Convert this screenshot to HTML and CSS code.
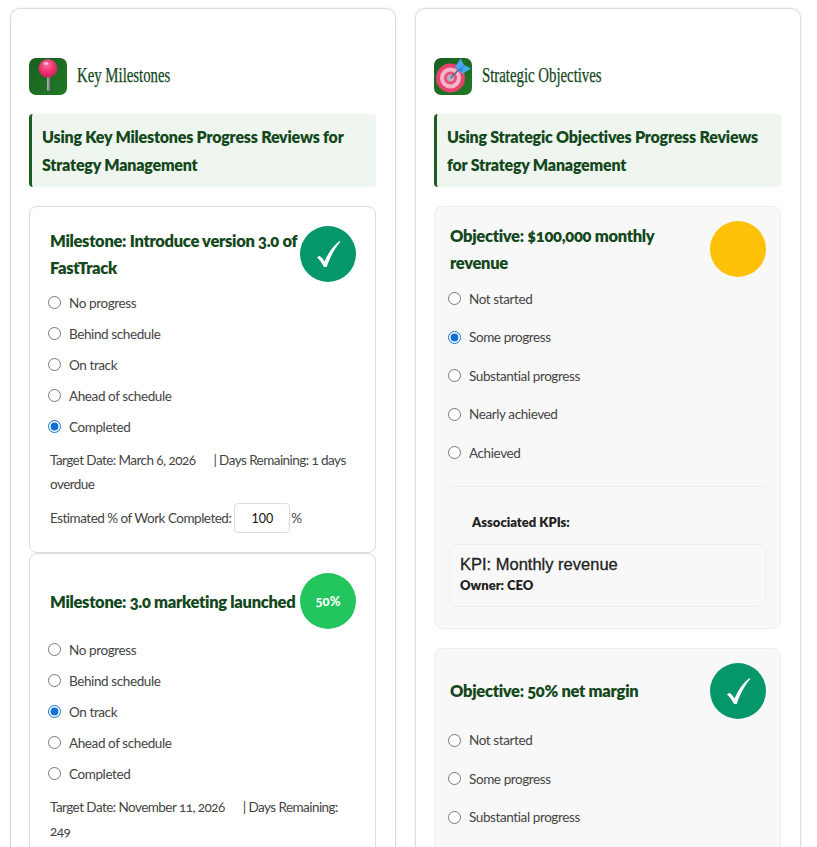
FILE: index.html
```html
<!DOCTYPE html>
<html lang="en">
<head>
    <meta charset="UTF-8">
    <meta name="viewport" content="width=device-width, initial-scale=1.0">
    <title>Strategy Progress Reviews</title>
    <link rel="stylesheet" href="styles.css">
</head>
<body>
    <div class="board">
        <!-- Milestones column -->
        <section class="panel">
            <div class="panel-head">
                <span class="panel-icon">
                    <svg width="38" height="37" viewBox="0 0 38 37">
                        <defs>
                            <radialGradient id="pin-ball" cx="0.45" cy="0.3" r="0.75">
                                <stop offset="0" stop-color="#ff6f9c"/>
                                <stop offset="0.55" stop-color="#ef2f6f"/>
                                <stop offset="1" stop-color="#c41f58"/>
                            </radialGradient>
                        </defs>
                        <rect x="18" y="18" width="3" height="14.500" fill="#a9a9b0"/>
                        <rect x="19.500" y="18" width="1.500" height="14.500" fill="#7d7d86"/>
                        <circle cx="19" cy="10.500" r="9.300" fill="url(#pin-ball)"/>
                        <ellipse cx="17" cy="5.500" rx="2.500" ry="1.500" fill="#ffb3ca"/>
                    </svg>
                </span>
                <h2 class="panel-title">Key Milestones</h2>
            </div>
            <div class="intro">Using Key Milestones Progress Reviews for Strategy Management</div>

            <div class="card">
                <div class="card-head">
                    <h3 class="card-title">Milestone: Introduce version 3.0 of FastTrack</h3>
                    <span class="status status-done">
                        <svg width="32" height="32" viewBox="0 0 32 32"><path d="M5 19.500 L7.500 17.800 C9.500 19.300 11.300 21.300 12.500 23.500 C16 15 21 8 27.500 3 L28.300 3.800 C22.500 11 17.500 20 14.800 29 L12 29 C10.300 25.500 8 22 5 19.500 Z" fill="#fff"/></svg>
                    </span>
                </div>
                <div class="options">
                    <label class="option"><input type="radio" name="m1">No progress</label>
                    <label class="option"><input type="radio" name="m1">Behind schedule</label>
                    <label class="option"><input type="radio" name="m1">On track</label>
                    <label class="option"><input type="radio" name="m1">Ahead of schedule</label>
                    <label class="option"><input type="radio" name="m1" checked>Completed</label>
                </div>
                <p class="meta">Target Date: March 6, 2026 <span class="meta-sep">| Days Remaining: 1 days overdue</span></p>
                <div class="estimate">Estimated % of Work Completed: <input class="estimate-input" type="text" value="100"> %</div>
            </div>

            <div class="card">
                <div class="card-head">
                    <h3 class="card-title">Milestone: 3.0 marketing launched</h3>
                    <span class="status status-half">50%</span>
                </div>
                <div class="options">
                    <label class="option"><input type="radio" name="m2">No progress</label>
                    <label class="option"><input type="radio" name="m2">Behind schedule</label>
                    <label class="option"><input type="radio" name="m2" checked>On track</label>
                    <label class="option"><input type="radio" name="m2">Ahead of schedule</label>
                    <label class="option"><input type="radio" name="m2">Completed</label>
                </div>
                <p class="meta">Target Date: November 11, 2026 <span class="meta-sep">| Days Remaining: 249</span></p>
            </div>
        </section>

        <!-- Objectives column -->
        <section class="panel">
            <div class="panel-head">
                <span class="panel-icon">
                    <svg width="38" height="37" viewBox="0 0 38 37">
                        <circle cx="16.500" cy="20" r="14.500" fill="#e8436f"/>
                        <circle cx="16.500" cy="20" r="10.500" fill="#f4b6c8"/>
                        <circle cx="16.500" cy="20" r="6.500" fill="#ea4f7b"/>
                        <circle cx="16.500" cy="20" r="3.500" fill="#b9b4bd"/>
                        <path d="M16.500 20 L27 9.500" stroke="#3f6d92" stroke-width="1.500"/>
                        <path d="M21 9 L26.500 0.500 L30 7 L37 10.500 L28.500 16 Z" fill="#45a9ee"/>
                        <path d="M24 12 L30 7 L27.500 14 Z" fill="#2b86cf"/>
                    </svg>
                </span>
                <h2 class="panel-title">Strategic Objectives</h2>
            </div>
            <div class="intro">Using Strategic Objectives Progress Reviews for Strategy Management</div>

            <div class="card card-grey">
                <div class="card-head">
                    <h3 class="card-title">Objective: $100,000 monthly revenue</h3>
                    <span class="status status-some"></span>
                </div>
                <div class="options options-wide">
                    <label class="option"><input type="radio" name="o1">Not started</label>
                    <label class="option"><input type="radio" name="o1" checked>Some progress</label>
                    <label class="option"><input type="radio" name="o1">Substantial progress</label>
                    <label class="option"><input type="radio" name="o1">Nearly achieved</label>
                    <label class="option"><input type="radio" name="o1">Achieved</label>
                </div>
                <div class="kpis">
                    <h4 class="kpis-title">Associated KPIs:</h4>
                    <div class="kpi">
                        <div class="kpi-name">KPI: Monthly revenue</div>
                        <div class="kpi-owner">Owner: CEO</div>
                    </div>
                </div>
            </div>

            <div class="card card-grey">
                <div class="card-head">
                    <h3 class="card-title">Objective: 50% net margin</h3>
                    <span class="status status-done">
                        <svg width="32" height="32" viewBox="0 0 32 32"><path d="M5 19.500 L7.500 17.800 C9.500 19.300 11.300 21.300 12.500 23.500 C16 15 21 8 27.500 3 L28.300 3.800 C22.500 11 17.500 20 14.800 29 L12 29 C10.300 25.500 8 22 5 19.500 Z" fill="#fff"/></svg>
                    </span>
                </div>
                <div class="options options-wide">
                    <label class="option"><input type="radio" name="o2">Not started</label>
                    <label class="option"><input type="radio" name="o2">Some progress</label>
                    <label class="option"><input type="radio" name="o2">Substantial progress</label>
                    <label class="option"><input type="radio" name="o2">Nearly achieved</label>
                    <label class="option"><input type="radio" name="o2" checked>Achieved</label>
                </div>
            </div>
        </section>
    </div>
</body>
</html>
```

FILE: styles.css
```css
html, body {
    margin: 0;
    height: 100vh;
    overflow: hidden;
    background: #ffffff;
}
body {
    font-family: 'Lato', sans-serif;
    font-variant-numeric: oldstyle-nums;
    color: #444444;
}
.board {
    display: grid;
    grid-template-columns: 386px 386px;
    column-gap: 19px;
    padding: 8px 0 0 10px;
}
.panel {
    border: 1px solid #dddddd;
    border-radius: 10px;
    box-shadow: 0 0 2px rgba(0, 0, 0, 0.12);
    padding: 49px 19px 0 18px;
}
.panel-head {
    display: flex;
    align-items: center;
    gap: 10px;
    margin-bottom: 19px;
}
.panel-icon {
    display: block;
    flex: none;
    width: 38px;
    height: 37px;
    border-radius: 7px;
    background: linear-gradient(135deg, #1b5e20, #217a26);
}
.panel-icon svg {
    display: block;
}
.panel-title {
    margin: 0 0 2px;
    font-family: 'Liberation Serif', serif;
    font-size: 20px;
    font-weight: 400;
    color: #14481c;
    -webkit-text-stroke: 0.25px #14481c;
    transform: scaleX(0.74);
    transform-origin: left center;
    white-space: nowrap;
}
.intro {
    border-left: 3px solid #1b5e20;
    border-radius: 4px;
    background: #eff6f0;
    padding: 9px 10px 8px;
    font-size: 16px;
    font-weight: 800;
    line-height: 28px;
    color: #14481c;
    letter-spacing: -0.2px;
    margin-bottom: 19px;
}
.card {
    border: 1px solid #dddddd;
    border-radius: 8px;
    background: #ffffff;
    padding: 19px 19px 19px 20px;
}
.card-grey {
    border-color: #eeeeee;
    background: #f8f8f8;
    padding: 14px 14px 21px 14px;
    margin-bottom: 19px;
}
.card-grey .card-title {
    padding-left: 1px;
}
.card-head {
    display: flex;
    align-items: center;
    justify-content: space-between;
}
.card-title {
    margin: 0;
    padding-top: 2px;
    font-size: 16.500px;
    font-weight: 800;
    line-height: 27px;
    color: #14481c;
    letter-spacing: -0.3px;
}
.status {
    flex: none;
    display: flex;
    align-items: center;
    justify-content: center;
    width: 56px;
    height: 56px;
    border-radius: 50%;
    font-size: 13px;
    font-weight: 900;
    color: #ffffff;
}
.status-done {
    background: #059669;
}
.status-half {
    background: #22c55e;
}
.status-some {
    background: #ffc107;
}
.options {
    display: flex;
    flex-direction: column;
    margin-top: 5px;
}
.option {
    display: flex;
    align-items: center;
    gap: 8px;
    height: 31px;
    font-size: 13.500px;
    letter-spacing: -0.4px;
}
.option input {
    margin: 0 0 0 -2px;
    width: 13px;
    height: 13px;
    accent-color: #1170cf;
}
.options-wide .option {
    height: 38.500px;
}
.options-wide {
    margin-top: 2.500px;
}
.options-wide .option input {
    margin-left: -1px;
}
.meta {
    margin: 6px 0 0;
    font-size: 13.500px;
    line-height: 24px;
    letter-spacing: -0.55px;
}
.meta-sep {
    margin-left: 15px;
}
.estimate {
    display: flex;
    align-items: center;
    gap: 3px;
    margin-top: 7px;
    font-size: 13.500px;
    letter-spacing: -0.5px;
}
.estimate-input {
    width: 56px;
    height: 30px;
    margin-right: -2px;
    box-sizing: border-box;
    border: 1px solid #dddddd;
    border-radius: 4px;
    font-family: 'Lato', sans-serif;
    font-size: 12.500px;
    color: #111111;
    text-align: center;
}
.kpis {
    border-top: 1px solid #eeeeee;
    margin-top: 13.500px;
}
.kpis-title {
    margin: 27px 0 14px 23px;
    font-family: 'Lato', sans-serif;
    font-size: 13px;
    font-weight: 800;
    color: #222222;
}
.kpi {
    border: 1px solid #eeeeee;
    border-radius: 8px;
    padding: 10px 10px 13px;
}
.kpi-name {
    font-family: 'Liberation Sans', sans-serif;
    font-size: 16.500px;
    -webkit-text-stroke: 0.3px #222222;
    color: #222222;
}
.kpi-owner {
    margin-top: 3px;
    font-size: 13px;
    font-weight: 800;
    color: #222222;
}
```
